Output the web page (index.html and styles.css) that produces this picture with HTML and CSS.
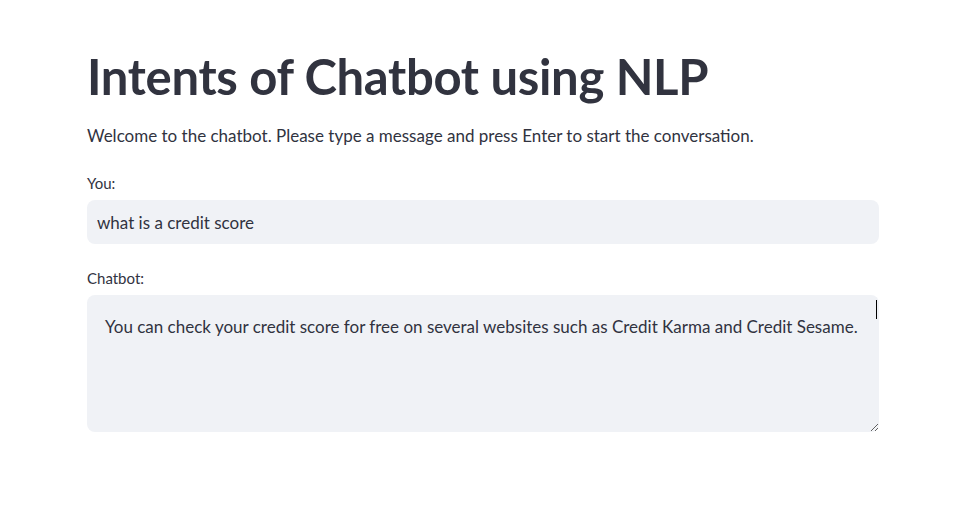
FILE: index.html
```html
<!DOCTYPE html>
<html lang="en">
<head>
<meta charset="utf-8">
<title>Intents of Chatbot using NLP</title>
<link rel="stylesheet" href="styles.css">
</head>
<body>
<main class="page">
  <h1 class="title">Intents of Chatbot using NLP</h1>
  <p class="intro">Welcome to the chatbot. Please type a message and press Enter to start the conversation.</p>
  <div class="field">
    <label class="label" for="you">You:</label>
    <input id="you" class="text-input" type="text" value="what is a credit score">
  </div>
  <div class="field">
    <label class="label" for="bot">Chatbot:</label>
    <div class="area-wrap">
      <textarea id="bot" class="text-area" readonly>You can check your credit score for free on several websites such as Credit Karma and Credit Sesame.</textarea>
      <span class="caret"></span>
    </div>
  </div>
</main>
</body>
</html>
```
FILE: styles.css
```css
html, body {
  margin: 0;
  padding: 0;
  background: #ffffff;
}
body {
  font-family: "Source Sans Pro", Lato, "Liberation Sans", sans-serif;
  color: #31333f;
}
.page {
  width: 792px;
  margin: 0 auto;
  padding-top: 46px;
}
.title {
  margin: 0;
  font-size: 49px;
  font-weight: 700;
  line-height: 60px;
  letter-spacing: -0.3px;
  color: #31333f;
}
.intro {
  margin: 18px 0 0;
  font-size: 17px;
  line-height: 24px;
}
.field {
  margin-top: 25px;
  display: flex;
  flex-direction: column;
}
.field + .field {
  margin-top: 24px;
}
.label {
  font-size: 15px;
  line-height: 20px;
  margin-bottom: 7px;
}
.text-input {
  box-sizing: border-box;
  height: 44px;
  border: none;
  border-radius: 8px;
  background: #f0f2f6;
  padding: 0 10px;
  font-family: inherit;
  font-size: 17px;
  color: #31333f;
  outline: none;
}
.area-wrap {
  position: relative;
}
.text-area {
  display: block;
  box-sizing: border-box;
  width: 792px;
  height: 137px;
  border: none;
  border-radius: 8px;
  background: #f0f2f6;
  padding: 20px 18px;
  font-family: inherit;
  font-size: 17px;
  line-height: 24px;
  color: #31333f;
  outline: none;
  resize: vertical;
}
.caret {
  position: absolute;
  top: 5px;
  right: 2px;
  width: 1px;
  height: 19px;
  background: #000;
}
```
